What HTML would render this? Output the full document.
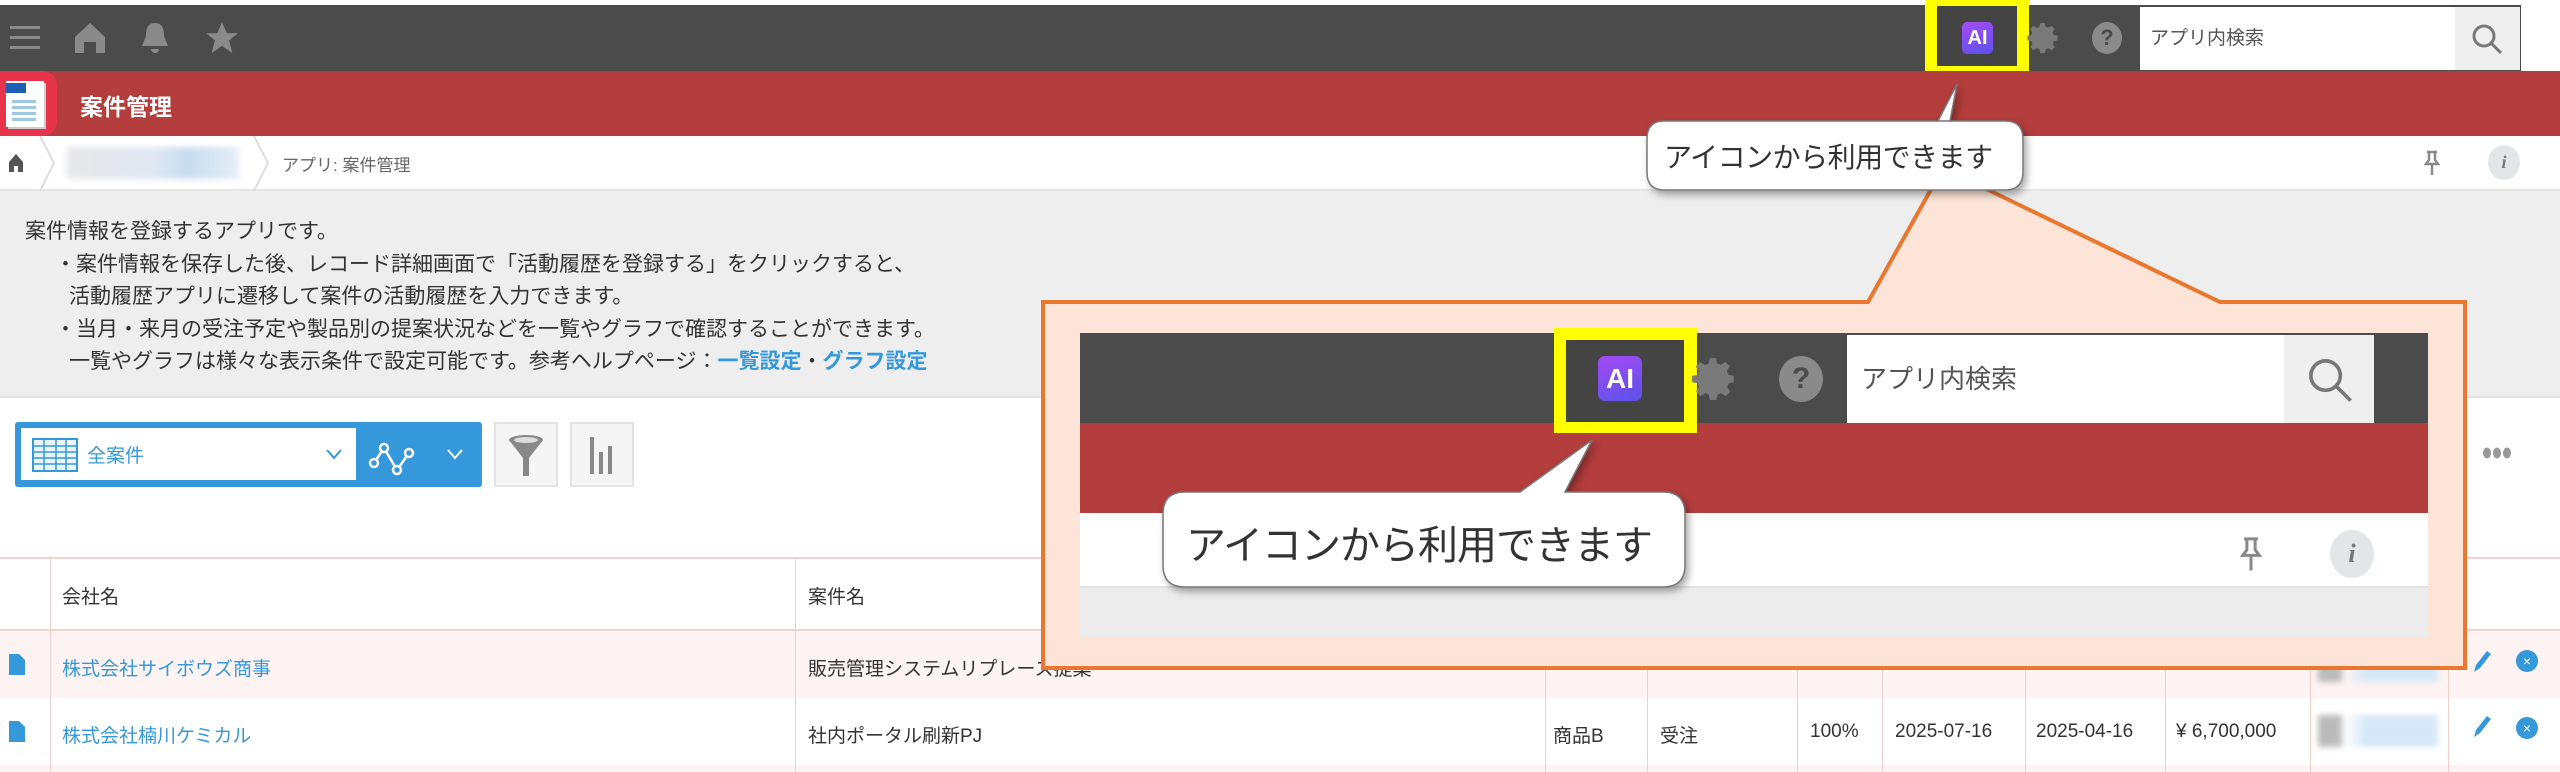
<!DOCTYPE html>
<html><head><meta charset="utf-8"><style>
*{margin:0;padding:0;box-sizing:border-box}
body{width:2560px;height:772px;position:relative;overflow:hidden;background:#fff;font-family:"Liberation Sans","Noto Sans CJK JP",sans-serif;color:#333}
.a{position:absolute}
.t{white-space:nowrap}
</style></head><body>
<!-- top bar -->
<div class="a" style="left:0;top:5px;width:2521px;height:66px;background:#4b4b4b"></div>
<div class="a" style="left:10px;top:26px;width:30px;height:3px;background:#8a8a8a;box-shadow:0 10px 0 #8a8a8a,0 20px 0 #8a8a8a"></div>
<svg class="a" style="left:72px;top:20px" width="36" height="36" viewBox="0 0 36 36"><path d="M18 3 L33 17 V33 H24 V22 H12 V33 H3 V17 Z" fill="#8a8a8a"/></svg>
<svg class="a" style="left:138px;top:20px" width="34" height="36" viewBox="0 0 34 36"><path d="M17 3 C9 3 8 10 8 16 L4 26 H30 L26 16 C26 10 25 3 17 3Z M13 29 A4 4 0 0 0 21 29Z" fill="#8a8a8a"/></svg>
<svg class="a" style="left:203px;top:19px" width="38" height="38" viewBox="0 0 24 24"><path d="M12 2l3 7h7l-5.5 4.5 2 8L12 17l-6.5 4.5 2-8L2 9h7z" fill="#8a8a8a"/></svg>
<!-- AI icon highlight -->
<div class="a" style="left:1925px;top:0;width:104px;height:78px;background:#ffff00"></div>
<div class="a" style="left:1937px;top:6px;width:80px;height:60px;background:#444"></div>
<div class="a t" style="left:1962px;top:22px;width:31px;height:32px;border-radius:5px;background:linear-gradient(160deg,#a54bf5,#5a52e8);color:#fff;font-weight:bold;font-size:20px;line-height:32px;text-align:center">AI</div>
<svg class="a" style="left:2026px;top:20px" width="36" height="36" viewBox="0 0 24 24"><path d="M12 8a4 4 0 1 0 0 8 4 4 0 0 0 0-8zm9 5.5v-3l-2.6-.6-.7-1.7 1.4-2.3-2.1-2.1-2.3 1.4-1.7-.7L12.5 2h-3l-.6 2.6-1.7.7-2.3-1.4-2.1 2.1 1.4 2.3-.7 1.7L1 10.5v3l2.6.6.7 1.7-1.4 2.3 2.1 2.1 2.3-1.4 1.7.7.6 2.6h3l.6-2.6 1.7-.7 2.3 1.4 2.1-2.1-1.4-2.3.7-1.7z" fill="#7a7a7a"/></svg>
<div class="a t" style="left:2092px;top:22px;width:30px;height:32px;border-radius:50%;background:#8a8a8a;color:#4b4b4b;font-weight:bold;font-size:22px;line-height:32px;text-align:center">?</div>
<div class="a t" style="left:2140px;top:7px;width:315px;height:63px;background:#fff;font-size:19px;line-height:63px;padding-left:10px;color:#555">アプリ内検索</div>
<div class="a" style="left:2455px;top:7px;width:65px;height:63px;background:#efefef"></div>
<svg class="a" style="left:2470px;top:22px" width="34" height="34" viewBox="0 0 34 34"><circle cx="14" cy="14" r="10" fill="none" stroke="#777" stroke-width="3"/><path d="M21 21 L31 31" stroke="#777" stroke-width="3"/></svg>
<!-- red bar -->
<div class="a" style="left:0;top:71px;width:2560px;height:65px;background:#b43d3d"></div>
<div class="a" style="left:0;top:71px;width:57px;height:65px;background:#e8344a;border-radius:0 14px 14px 0"></div>
<div class="a" style="left:6px;top:81px;width:38px;height:46px;background:#fff;box-shadow:2px 2px 0 #ccc"></div>
<div class="a" style="left:6px;top:83px;width:20px;height:10px;background:#1d5fb5"></div>
<div class="a" style="left:12px;top:100px;width:24px;height:3px;background:#9cc8e6;box-shadow:0 6px 0 #9cc8e6,0 12px 0 #9cc8e6,0 18px 0 #9cc8e6"></div>
<div class="a t" style="left:80px;top:88px;font-size:23px;font-weight:bold;color:#fff">案件管理</div>
<!-- breadcrumb -->
<div class="a" style="left:0;top:136px;width:2560px;height:55px;background:#fff;border-bottom:2px solid #e6e6e6"></div>
<svg class="a" style="left:8px;top:153px" width="16" height="20" viewBox="0 0 16 20"><path d="M8 1 L15 9 V19 H10 V13 H6 V19 H1 V9Z" fill="#555"/></svg>
<svg class="a" style="left:38px;top:136px" width="20" height="55"><path d="M2 0 L16 27 L2 55" fill="none" stroke="#ddd" stroke-width="2"/></svg>
<div class="a" style="left:67px;top:147px;width:172px;height:32px;background:linear-gradient(90deg,#e8e8e8,#e0e8f2 50%,#c8dcf0 70%,#e6eef6);filter:blur(3px)"></div>
<svg class="a" style="left:252px;top:136px" width="20" height="55"><path d="M2 0 L16 27 L2 55" fill="none" stroke="#ddd" stroke-width="2"/></svg>
<div class="a t" style="left:282px;top:151px;font-size:17px;color:#666">アプリ: 案件管理</div>
<svg class="a" style="left:2424px;top:150px" width="16" height="26" viewBox="0 0 16 26"><path d="M3 2 H13 M5 2 V10 L2 14 H14 L11 10 V2 M8 14 V25" fill="none" stroke="#888" stroke-width="2.4"/></svg>
<div class="a t" style="left:2488px;top:145px;width:32px;height:35px;border-radius:50%;background:#e2e6e8;color:#777;font-style:italic;font-weight:bold;font-size:18px;line-height:35px;text-align:center;font-family:'Liberation Serif',serif">i</div>
<!-- description -->
<div class="a" style="left:0;top:191px;width:2560px;height:207px;background:#eeeeee;border-bottom:2px solid #e2e2e2"></div>
<div class="a t" style="left:25px;top:216px;font-size:21px;line-height:32.5px;color:#333">案件情報を登録するアプリです。<br>
<span style="padding-left:30px">・案件情報を保存した後、レコード詳細画面で「活動履歴を登録する」をクリックすると、</span><br>
<span style="padding-left:44px">活動履歴アプリに遷移して案件の活動履歴を入力できます。</span><br>
<span style="padding-left:30px">・当月・来月の受注予定や製品別の提案状況などを一覧やグラフで確認することができます。</span><br>
<span style="padding-left:44px">一覧やグラフは様々な表示条件で設定可能です。参考ヘルプページ：<b style="color:#3498db">一覧設定</b>・<b style="color:#3498db">グラフ設定</b></span></div>
<!-- toolbar -->
<div class="a" style="left:15px;top:422px;width:467px;height:65px;background:#3498db;border-radius:3px"></div>
<div class="a" style="left:21px;top:428px;width:335px;height:52px;background:#fff"></div>
<svg class="a" style="left:32px;top:438px" width="46" height="34" viewBox="0 0 46 34"><rect x="1" y="1" width="44" height="32" fill="#eaf4fc" stroke="#3498db" stroke-width="2"/><path d="M1 8H45M1 14H45M1 20H45M1 26H45M12 1V33M24 1V33M34 1V33" stroke="#3498db" stroke-width="1.5"/></svg>
<div class="a t" style="left:87px;top:441px;font-size:19px;color:#3498db">全案件</div>
<svg class="a" style="left:325px;top:448px" width="18" height="12"><path d="M2 2 L9 10 L16 2" fill="none" stroke="#3498db" stroke-width="2"/></svg>
<svg class="a" style="left:368px;top:435px" width="60" height="45" viewBox="0 0 60 45"><path d="M6 28 L16 13 L29 35 L41 18" fill="none" stroke="#fff" stroke-width="2.5"/><circle cx="6" cy="28" r="4" fill="#3498db" stroke="#fff" stroke-width="2.5"/><circle cx="16" cy="13" r="4" fill="#3498db" stroke="#fff" stroke-width="2.5"/><circle cx="29" cy="35" r="4" fill="#3498db" stroke="#fff" stroke-width="2.5"/><circle cx="41" cy="18" r="4" fill="#3498db" stroke="#fff" stroke-width="2.5"/></svg>
<svg class="a" style="left:446px;top:448px" width="18" height="12"><path d="M2 2 L9 10 L16 2" fill="none" stroke="#fff" stroke-width="2"/></svg>
<div class="a" style="left:494px;top:422px;width:64px;height:65px;background:#f5f5f5;border:2px solid #e3e3e3"></div>
<svg class="a" style="left:506px;top:434px" width="40" height="44" viewBox="0 0 40 44"><ellipse cx="20" cy="6" rx="17" ry="5" fill="#888"/><path d="M3 6 L17 24 V42 H23 V24 L37 6Z" fill="#888"/><ellipse cx="20" cy="6" rx="12" ry="3" fill="#ddd"/></svg>
<div class="a" style="left:570px;top:422px;width:64px;height:65px;background:#f5f5f5;border:2px solid #e3e3e3"></div>
<div class="a" style="left:590px;top:437px;width:4px;height:37px;background:#888"></div>
<div class="a" style="left:599px;top:452px;width:4px;height:22px;background:#888"></div>
<div class="a" style="left:608px;top:446px;width:4px;height:28px;background:#888"></div>
<svg class="a" style="left:2482px;top:446px" width="32" height="14"><ellipse cx="5" cy="7" rx="4" ry="5.5" fill="#999"/><ellipse cx="15" cy="7" rx="4" ry="5.5" fill="#999"/><ellipse cx="25" cy="7" rx="4" ry="5.5" fill="#999"/></svg>
<!-- table -->
<div class="a" style="left:0;top:557px;width:2560px;height:2px;background:#f3d3cf"></div>
<div class="a" style="left:0;top:629px;width:2560px;height:2px;background:#f3d3cf"></div>
<div class="a" style="left:0;top:631px;width:2560px;height:67px;background:#fdf3f2"></div>
<div class="a" style="left:0;top:765px;width:2560px;height:7px;background:#fdf3f2"></div>
<div class="a" style="left:50px;top:558px;width:1px;height:214px;background:#f0cfcb"></div>
<div class="a" style="left:795px;top:558px;width:1px;height:214px;background:#f0cfcb"></div>
<div class="a" style="left:1545px;top:558px;width:1px;height:214px;background:#f0cfcb"></div>
<div class="a" style="left:1647px;top:558px;width:1px;height:214px;background:#f0cfcb"></div>
<div class="a" style="left:1797px;top:558px;width:1px;height:214px;background:#f0cfcb"></div>
<div class="a" style="left:1882px;top:558px;width:1px;height:214px;background:#f0cfcb"></div>
<div class="a" style="left:2025px;top:558px;width:1px;height:214px;background:#f0cfcb"></div>
<div class="a" style="left:2165px;top:558px;width:1px;height:214px;background:#f0cfcb"></div>
<div class="a" style="left:2310px;top:558px;width:1px;height:214px;background:#f0cfcb"></div>
<div class="a" style="left:2448px;top:558px;width:1px;height:214px;background:#f0cfcb"></div>
<div class="a t" style="left:62px;top:582px;font-size:19px;color:#333">会社名</div>
<div class="a t" style="left:808px;top:582px;font-size:19px;color:#333">案件名</div>
<svg class="a" style="left:9px;top:654px" width="16" height="21"><path d="M0 0H10L16 6V21H0Z" fill="#3498db"/></svg>
<svg class="a" style="left:9px;top:721px" width="16" height="21"><path d="M0 0H10L16 6V21H0Z" fill="#3498db"/></svg>
<div class="a t" style="left:62px;top:654px;font-size:19px;color:#3498db">株式会社サイボウズ商事</div>
<div class="a t" style="left:62px;top:721px;font-size:19px;color:#3498db">株式会社楠川ケミカル</div>
<div class="a t" style="left:808px;top:654px;font-size:19px">販売管理システムリプレース提案</div>
<div class="a t" style="left:808px;top:721px;font-size:19px">社内ポータル刷新PJ</div>
<div class="a t" style="left:1553px;top:721px;font-size:19px">商品B</div>
<div class="a t" style="left:1660px;top:721px;font-size:19px">受注</div>
<div class="a t" style="left:1810px;top:721px;font-size:19px">100%</div>
<div class="a t" style="left:1895px;top:721px;font-size:19px">2025-07-16</div>
<div class="a t" style="left:2036px;top:721px;font-size:19px">2025-04-16</div>
<div class="a t" style="left:2176px;top:721px;font-size:19px">¥ 6,700,000</div>
<div class="a" style="left:2318px;top:650px;width:120px;height:32px;background:linear-gradient(90deg,#bbb 0 18%,#fdf3f2 22%,#d6e8f7 40%,#d6e8f7 100%);filter:blur(3px)"></div>
<div class="a" style="left:2318px;top:715px;width:120px;height:32px;background:linear-gradient(90deg,#bbb 0 18%,#fff 22%,#d6e8f7 40%,#d6e8f7 100%);filter:blur(3px)"></div>
<svg class="a" style="left:2470px;top:648px" width="22" height="26"><path d="M4 24 L6 17 L17 3 L21 6 L10 20Z" fill="#3498db"/></svg>
<svg class="a" style="left:2470px;top:713px" width="22" height="26"><path d="M4 24 L6 17 L17 3 L21 6 L10 20Z" fill="#3498db"/></svg>
<div class="a t" style="left:2516px;top:650px;width:22px;height:22px;border-radius:50%;background:#3498db;color:#fff;font-size:14px;line-height:22px;text-align:center">×</div>
<div class="a t" style="left:2516px;top:717px;width:22px;height:22px;border-radius:50%;background:#3498db;color:#fff;font-size:14px;line-height:22px;text-align:center">×</div>
<!-- big orange callout -->
<svg class="a" style="left:0;top:0" width="2560" height="772">
<path d="M1043 302 H1868 L1943 168 L2220 302 H2465 V668 H1043 Z" fill="#fce4d8" stroke="#e9772f" stroke-width="4"/>
</svg>
<div class="a" style="left:1080px;top:333px;width:1348px;height:304px;background:#ececec"></div>
<div class="a" style="left:1080px;top:333px;width:1348px;height:90px;background:#4b4b4b"></div>
<div class="a" style="left:1080px;top:423px;width:1348px;height:90px;background:#b43d3d"></div>
<div class="a" style="left:1080px;top:513px;width:1348px;height:75px;background:#fff;border-bottom:2px solid #e3e3e3"></div>
<div class="a" style="left:1554px;top:328px;width:143px;height:105px;background:#ffff00"></div>
<div class="a" style="left:1566px;top:340px;width:118px;height:82px;background:#444"></div>
<div class="a t" style="left:1598px;top:356px;width:44px;height:45px;border-radius:7px;background:linear-gradient(160deg,#a54bf5,#5a52e8);color:#fff;font-weight:bold;font-size:28px;line-height:45px;text-align:center">AI</div>
<svg class="a" style="left:1690px;top:352px" width="50" height="54" viewBox="0 0 24 24"><path d="M12 8a4 4 0 1 0 0 8 4 4 0 0 0 0-8zm9 5.5v-3l-2.6-.6-.7-1.7 1.4-2.3-2.1-2.1-2.3 1.4-1.7-.7L12.5 2h-3l-.6 2.6-1.7.7-2.3-1.4-2.1 2.1 1.4 2.3-.7 1.7L1 10.5v3l2.6.6.7 1.7-1.4 2.3 2.1 2.1 2.3-1.4 1.7.7.6 2.6h3l.6-2.6 1.7-.7 2.3 1.4 2.1-2.1-1.4-2.3.7-1.7z" fill="#7a7a7a"/></svg>
<div class="a t" style="left:1779px;top:356px;width:44px;height:46px;border-radius:50%;background:#8a8a8a;color:#4b4b4b;font-weight:bold;font-size:30px;line-height:46px;text-align:center">?</div>
<div class="a t" style="left:1847px;top:335px;width:437px;height:88px;background:#fff;font-size:26px;line-height:88px;padding-left:14px;color:#555">アプリ内検索</div>
<div class="a" style="left:2284px;top:335px;width:90px;height:88px;background:#efefef"></div>
<svg class="a" style="left:2305px;top:355px" width="50" height="50" viewBox="0 0 34 34"><circle cx="14" cy="14" r="10" fill="none" stroke="#777" stroke-width="2.5"/><path d="M21 21 L31 31" stroke="#777" stroke-width="2.5"/></svg>
<svg class="a" style="left:2240px;top:535px" width="22" height="38" viewBox="0 0 16 26"><path d="M3 2 H13 M5 2 V10 L2 14 H14 L11 10 V2 M8 14 V25" fill="none" stroke="#888" stroke-width="2.2"/></svg>
<div class="a t" style="left:2330px;top:530px;width:44px;height:48px;border-radius:50%;background:#e2e6e8;color:#777;font-style:italic;font-weight:bold;font-size:26px;line-height:48px;text-align:center;font-family:'Liberation Serif',serif">i</div>
<!-- bubbles -->
<svg class="a" style="left:0;top:0" width="2560" height="772">
<defs><filter id="sh" x="-10%" y="-10%" width="130%" height="140%"><feDropShadow dx="3" dy="4" stdDeviation="4" flood-color="#000" flood-opacity="0.35"/></filter></defs>
<path d="M1185 492 H1520 L1592 440 L1565 492 H1663 Q1685 492 1685 514 V565 Q1685 587 1663 587 H1185 Q1163 587 1163 565 V514 Q1163 492 1185 492Z" fill="#fff" stroke="#777" stroke-width="1.5" filter="url(#sh)"/>
<path d="M1664 121 H1950 L1957 84 L1938 121 H2005 Q2023 121 2023 139 V172 Q2023 190 2005 190 H1664 Q1647 190 1647 172 V139 Q1647 121 1664 121Z" fill="#fff" stroke="#777" stroke-width="1.5" filter="url(#sh)"/>
</svg>
<div class="a t" style="left:1186px;top:513px;font-size:40px;color:#333;letter-spacing:-1px">アイコンから利用できます</div>
<div class="a t" style="left:1664px;top:136px;font-size:28px;color:#333;letter-spacing:-0.5px">アイコンから利用できます</div>
</body></html>
